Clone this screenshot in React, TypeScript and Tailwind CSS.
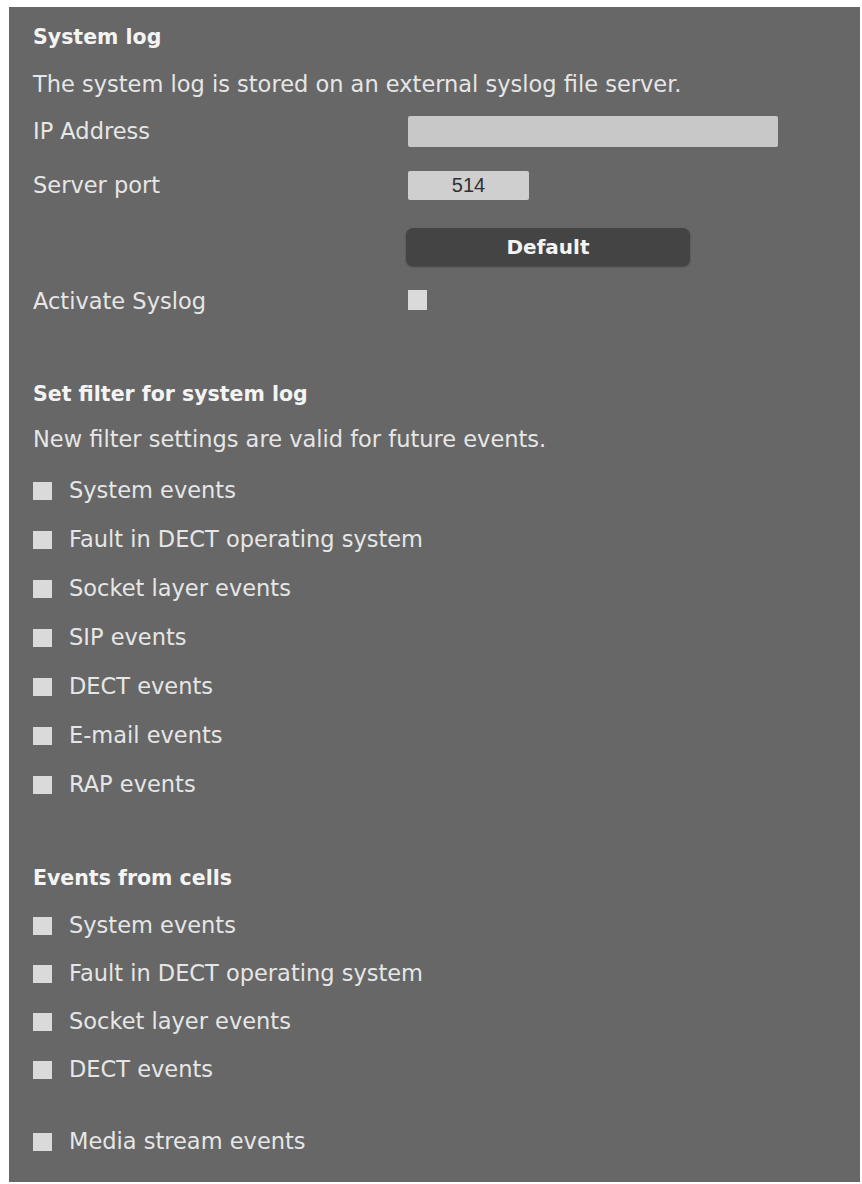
import React from "react";

const Box = () => <span className="block w-[19px] h-[18px] bg-[#dadada] shrink-0" />;

const Item = ({ label, className = "h-[49px]" }: { label: string; className?: string }) => (
  <div className={`flex items-center ${className}`}>
    <Box />
    <span className="ml-[17px]">{label}</span>
  </div>
);

export default function App() {
  const filters = [
    "System events",
    "Fault in DECT operating system",
    "Socket layer events",
    "SIP events",
    "DECT events",
    "E-mail events",
    "RAP events",
  ];
  return (
    <div className="w-[862px] h-[1184px] bg-white pt-[7px] pl-[9px] pr-[2px] pb-[2px]" style={{ fontFamily: '"DejaVu Sans", Verdana, sans-serif' }}>
      <div className="h-full bg-[#676767] text-[#e6e6e6] text-[22.5px] pl-[24px] pt-[10px]">
        <div className="h-[40px] flex items-center font-bold text-[20.5px] text-[#f4f4f4]">System log</div>
        <div className="h-[56px] flex items-center">The system log is stored on an external syslog file server.</div>
        <div className="h-[38px] flex items-center">
          <span className="w-[375px]">IP Address</span>
          <span className="block w-[370px] h-[31px] bg-[#c8c8c8] rounded-[2px] -mt-[2px]" />
        </div>
        <div className="h-[70px] flex items-center">
          <span className="w-[375px]">Server port</span>
          <span className="flex items-center justify-center w-[121px] h-[29px] bg-[#cfcfcf] rounded-[2px] text-[#303030] text-[20px] -mt-[2px]" style={{ fontFamily: '"Liberation Sans", Arial, sans-serif' }}>514</span>
        </div>
        <div className="h-[52px] flex items-center">
          <span className="w-[373px]" />
          <span className="flex items-center justify-center w-[284px] h-[38px] bg-[#444444] rounded-[7px] text-[#f4f4f4] font-bold text-[20px] shadow-[0_1px_2px_rgba(0,0,0,0.35)]">Default</span>
        </div>
        <div className="h-[58px] flex items-center">
          <span className="w-[375px]">Activate Syslog</span>
          <span className="block w-[19px] h-[20px] bg-[#dadada] -mt-[4px]" />
        </div>
        <div className="h-[43px]" />
        <div className="h-[40px] flex items-center font-bold text-[20.5px] text-[#f4f4f4]">Set filter for system log</div>
        <div className="h-[52px] flex items-center">New filter settings are valid for future events.</div>
        <div>
          {filters.map((f) => (
            <Item key={f} label={f} />
          ))}
        </div>
        <div className="h-[49px]" />
        <div className="h-[40px] flex items-center font-bold text-[20.5px] text-[#f4f4f4]">Events from cells</div>
        <div className="h-[4px]" />
        <Item label="System events" className="h-[48px]" />
        <Item label="Fault in DECT operating system" className="h-[48px]" />
        <Item label="Socket layer events" className="h-[48px]" />
        <Item label="DECT events" className="h-[48px]" />
        <div className="h-[24px]" />
        <Item label="Media stream events" className="h-[48px]" />
      </div>
    </div>
  );
}
